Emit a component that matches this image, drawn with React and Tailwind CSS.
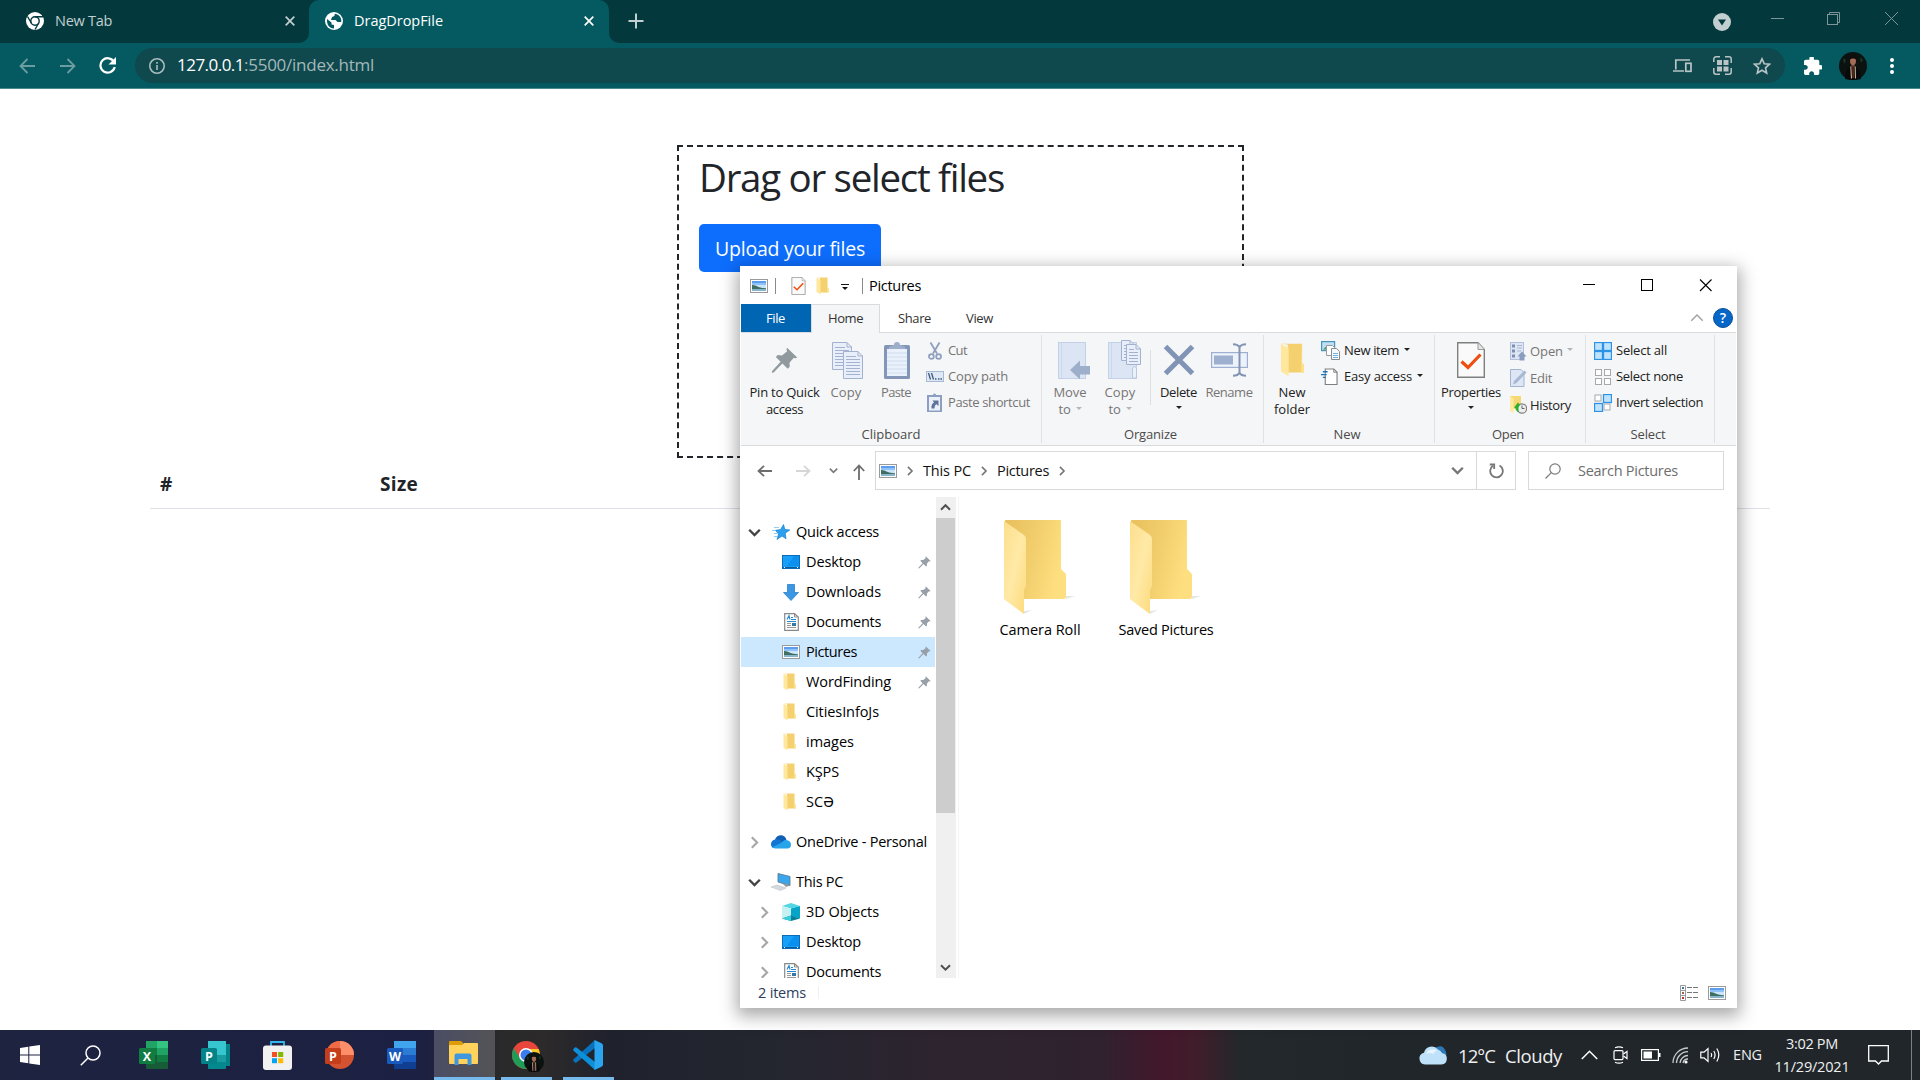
import React, { useLayoutEffect, useRef } from "react";

/* Text run whose letter spacing is computed so that it spans `w` pixels. */
function T({ w, children, className = "" }) {
  const ref = useRef(null);
  useLayoutEffect(() => {
    const el = ref.current;
    el.style.letterSpacing = "0px";
    const natural = el.getBoundingClientRect().width;
    el.style.letterSpacing = (w - natural) / String(children).length + "px";
  }, [w, children]);
  return (
    <span ref={ref} className={"inline-block shrink-0 whitespace-pre " + className}>
      {children}
    </span>
  );
}

/* ---------- shared icons ---------- */

function PicIcon({ className = "" }) {
  return (
    <svg width="18" height="14" viewBox="0 0 18 14" className={"shrink-0 " + className}>
      <rect x="0.5" y="0.5" width="17" height="13" fill="#fff" stroke="#9a9a9a" />
      <rect x="2" y="2" width="14" height="3" fill="#5c9df0" />
      <rect x="2" y="4" width="14" height="2" fill="#8fc2f7" />
      <rect x="2" y="6" width="14" height="3" fill="#cbe6fa" />
      <path d="M2 6c2-.2 4 .8 6 1.700 2 .8 4 1.300 8 1.500V10.500H2z" fill="#3f6f63" />
      <rect x="2" y="10" width="14" height="2" fill="#86b5cc" />
    </svg>
  );
}

function FolderSmall({ className = "", w = 13, h = 18 }) {
  return (
    <svg width={w} height={h} viewBox="0 0 13 18" className={"shrink-0 " + className}>
      <path d="M0.500 0.500H11.500V10.500L12.500 11.500V15.500H4V1z" fill="#f5d06f" />
      <path d="M11 1v14.500h1.500v-4l-1-1z" fill="#fde08a" />
      <path d="M0.500 0.500L4.500 3V17.500L0.500 15z" fill="#ffe79e" />
    </svg>
  );
}

function FolderLarge() {
  return (
    <svg width="74" height="98" viewBox="0 0 74 98">
      <defs>
        <linearGradient id="fb" x1="0" y1="0" x2="1" y2="0.300">
          <stop offset="0" stopColor="#e8c05c" />
          <stop offset="0.500" stopColor="#f1cd6c" />
          <stop offset="1" stopColor="#fedf80" />
        </linearGradient>
        <linearGradient id="ff" x1="0" y1="0" x2="1" y2="1">
          <stop offset="0" stopColor="#fddf8d" />
          <stop offset="0.500" stopColor="#ffe9a6" />
          <stop offset="1" stopColor="#fddb7c" />
        </linearGradient>
      </defs>
      <path d="M62 76l9 0-9 3z" fill="#dcdcdc" opacity="0.700" />
      <path d="M20 91l8-1-8 4z" fill="#dcdcdc" opacity="0.700" />
      <path d="M1 1a1 1 0 0 1 1-1H56a1 1 0 0 1 1 1V49l4 4q1 1 1 2V77a2 2 0 0 1-2 2H20L1 70z" fill="url(#fb)" />
      <path d="M0 1L20 15q2 1.500 2 4V66l-2 4V94L1 80q-1-.8-1-2z" fill="url(#ff)" />
    </svg>
  );
}

function Pin({ size = 14, color = "#97a0a8" }) {
  return (
    <svg width={size} height={size} viewBox="0 0 14 14" className="shrink-0">
      <path d="M8.300 0.400L13.600 5.400L12.400 5.800L11.800 5.600L9.600 8.200L9.700 10.300L8.700 11.300L5.900 8.600L1.200 13.400L0.400 13.200L0.600 12.400L5 7.700L2.500 5.200L3.500 4.200L5.700 4.400L8.400 2.200L8 1.500z" fill={color} />
    </svg>
  );
}

function DesktopIcon() {
  return (
    <svg width="18" height="14" viewBox="0 0 18 14">
      <rect x="0.500" y="0.500" width="17" height="13" fill="#18a0f8" stroke="#0b6cb8" />
      <path d="M12 1h5v10H5z" fill="#0a91f0" />
      <path d="M1 12.500h16" stroke="#0b5c9e" />
      <path d="M2 12.500h1M15 12.500h1" stroke="#fff" />
    </svg>
  );
}

function DownloadIcon() {
  return (
    <svg width="18" height="17" viewBox="0 0 18 17">
      <path d="M5.500 0.500h7v8h4L9 16.500L1.500 8.500h4z" fill="#3b97e3" stroke="#2880cb" strokeWidth="0.800" />
    </svg>
  );
}

function DocumentIcon() {
  return (
    <svg width="15" height="18" viewBox="0 0 15 18">
      <path d="M0.700 0.700H10.500L14.300 4V17.300H0.700z" fill="#fff" stroke="#8a8a8a" strokeWidth="1.200" />
      <path d="M10.500 1v3h3" fill="none" stroke="#8a8a8a" />
      <path d="M3 6.500L5 2.500L6 6.500M7 4.500h2M7 6.500h5M3 8.500h9" stroke="#2587cf" fill="none" strokeWidth="1.100" />
      <path d="M3 10.500h4M3 12.500h4M3 14.500h9" stroke="#9a9a9a" />
      <rect x="8" y="10" width="4" height="3" fill="#3277aa" />
    </svg>
  );
}

function StarIcon() {
  return (
    <svg width="18" height="17" viewBox="0 0 18 17">
      <path d="M11.500 0.500L12.800 5.300L17.800 6L13.300 9.200L14 14.800L10 12L5 15.500L6.500 10L3.500 6.300L8.600 5.500z" fill="#2ba0ee" stroke="#1c83cf" strokeWidth="0.700" />
      <path d="M2 3.500h5M0 6.500h3M2 9.500h3M2 12.500h3" stroke="#8fcdf6" />
    </svg>
  );
}

function OneDriveIcon() {
  return (
    <svg width="20" height="14" viewBox="0 0 20 14">
      <path d="M4 4.500C5 1.500 8 0 10.500 0.300C13 .6 15 2.500 15.500 5L8 9z" fill="#0f5fb4" />
      <path d="M4 4.500c2-.5 4 0 5.500 1L14 9l-12 4C0 12 0 9.500 0 9c0-2.500 2-4.300 4-4.500z" fill="#1277d3" />
      <path d="M10 8l3-2.500c1.500-.8 3.500-.6 4.500.3C19.500 6.800 20 8.500 20 10c0 2-1.500 3.500-3.500 3.500H4c-1 0-2-.5-2.500-1.200z" fill="#28a4ea" />
    </svg>
  );
}

function ThisPcIcon() {
  return (
    <svg width="20" height="18" viewBox="0 0 20 18">
      <path d="M7 0.500L19 3.500V12.500L7 9z" fill="#3aa6ee" stroke="#5c7a90" strokeWidth="0.900" />
      <path d="M12 11l3 3 4-1.500-4-2z" fill="#8e979e" />
      <path d="M0 14L6 12L15 15L9.500 17.500z" fill="#d5dade" stroke="#b7bdc2" strokeWidth="0.500" />
    </svg>
  );
}

function CubeIcon() {
  return (
    <svg width="18" height="18" viewBox="0 0 18 18">
      <path d="M9 0L18 3L9 5.500L0 3z" fill="#53d6e4" />
      <path d="M0 3L9 5.500V13L0 15.500z" fill="#c5f2f1" />
      <path d="M18 3L9 5.500V13L18 15.500z" fill="#06a5c8" />
      <path d="M0 15.500L9 12.500L18 15.500L9 18z" fill="#0a7f98" />
      <path d="M0 15.500L9 12.500V18z" fill="#35d0dc" />
    </svg>
  );
}

function Chev({ dir = "down", size = 11, color = "#444", sw = 2, className = "" }) {
  const d = {
    down: "M1 3.200L5.500 7.700L10 3.200",
    up: "M1 7.700L5.500 3.200L10 7.700",
    right: "M3.200 1L7.700 5.500L3.200 10",
  }[dir];
  return (
    <svg width={size} height={size} viewBox="0 0 11 11" className={"shrink-0 " + className}>
      <path d={d} fill="none" stroke={color} strokeWidth={sw} />
    </svg>
  );
}

function Tri({ color = "#222", className = "" }) {
  return (
    <svg width="6" height="3" viewBox="0 0 6 3" className={"shrink-0 " + className}>
      <path d="M0 0H6L3 3z" fill={color} />
    </svg>
  );
}

function CheckDoc({ w, h }) {
  return (
    <svg width={w} height={h} viewBox="0 0 28 36" className="shrink-0">
      <path d="M0.700 0.700H21L27.300 7.500V35.300H0.700z" fill="#fafafa" stroke="#7f7f7f" strokeWidth="1.400" />
      <path d="M21 0.700V7.500H27.300" fill="#e6e6e6" stroke="#9a9a9a" />
      <path d="M4.500 19.500L11 25.500L23.500 12.500" fill="none" stroke="#ec4f10" strokeWidth="3.200" />
    </svg>
  );
}

/* ---------- browser ---------- */

function Portrait({ size }) {
  return (
    <svg width={size} height={size} viewBox="0 0 28 28" className="shrink-0">
      <circle cx="14" cy="14" r="14" fill="#0b1210" />
      <path d="M4 6l3 2-2 4zM21 5l3 3-2 3z" fill="#1c3a28" />
      <path d="M6 27C6 19 9 15 14 15s8 4 8 12q-8 2-16 0z" fill="#08090c" />
      <path d="M12.500 12h3v3h-3z" fill="#7d4c3c" />
      <ellipse cx="14" cy="9" rx="3" ry="4" fill="#a36c56" />
      <path d="M10.500 8c-.5-5 7.500-5 7 0-1.500-2-5.500-2-7 0z" fill="#120c0a" />
      <path d="M11.800 14.500l.7 12M16.200 14.500l.3 12" stroke="#cfae88" strokeWidth="1.100" />
      <path d="M13.200 14h1.800v12h-1.800z" fill="#4b2a26" />
    </svg>
  );
}

function TabClose({ color }) {
  return (
    <svg width="10" height="10" viewBox="0 0 10 10" className="shrink-0">
      <path d="M0.700 0.700L9.300 9.300M9.300 0.700L0.700 9.300" stroke={color} strokeWidth="1.700" />
    </svg>
  );
}

function TabStrip() {
  return (
    <div className="flex h-[43px] bg-[#03393d]">
      <div className="relative flex w-[309px] items-center pl-[26px]">
        <svg width="18" height="18" viewBox="0 0 18 18" className="mb-px shrink-0">
          <circle cx="9" cy="9" r="9" fill="#fff" />
          <circle cx="9" cy="9" r="4.200" fill="none" stroke="#03393d" strokeWidth="1.400" />
          <path d="M9 4.800h8M5.300 11L1.500 4.500M12.700 11L9 17.500" stroke="#03393d" strokeWidth="1.400" />
        </svg>
        <T w={57} className="mb-[2px] ml-[11px] text-[14.500px] text-[#c2cfd0]">New Tab</T>
        <div className="mb-px ml-auto mr-[14px] flex"><TabClose color="#c2cfd0" /></div>
        <div className="absolute bottom-0 right-0 h-[10px] w-[10px] bg-[#045a60]">
          <div className="h-full w-full rounded-br-[10px] bg-[#03393d]" />
        </div>
      </div>
      <div className="flex w-[300px] items-center rounded-t-[10px] bg-[#045a60] pl-[16px]">
        <svg width="18" height="18" viewBox="0 0 18 18" className="mb-px shrink-0">
          <circle cx="9" cy="9" r="9" fill="#fff" />
          <path d="M2 7l4.500 3.500v2L9 13v3.500C4 16.500 1.500 12 2 7zM9.500 1.800c1 1.700-.5 2.700-2.500 3.200l-1 3h4.500l2 2h3.700C17 5.500 13.500 2 9.500 1.800z" fill="#045a60" />
        </svg>
        <T w={89} className="mb-[2px] ml-[11px] text-[14.500px] text-white">DragDropFile</T>
        <div className="mb-px ml-auto mr-[15px] flex"><TabClose color="#fff" /></div>
      </div>
      <div className="relative flex flex-1 items-center">
        <div className="absolute bottom-0 left-0 h-[10px] w-[10px] bg-[#045a60]">
          <div className="h-full w-full rounded-bl-[10px] bg-[#03393d]" />
        </div>
        <svg width="16" height="16" viewBox="0 0 16 16" className="mb-px ml-[19px]">
          <path d="M8 0.500V15.500M0.500 8H15.500" stroke="#c2cfd0" strokeWidth="2" />
        </svg>
        <svg width="18" height="18" viewBox="0 0 18 18" className="ml-auto">
          <circle cx="9" cy="9" r="9" fill="#c2cfd0" />
          <path d="M5 6.500H13L9 12.500z" fill="#03393d" />
        </svg>
        <svg width="128" height="14" viewBox="0 0 128 14" className="mb-[7px] ml-[40px] mr-[21px]" fill="none" stroke="#7d9698">
          <path d="M0 7.500H13" />
          <rect x="56.500" y="3.500" width="10" height="10" />
          <path d="M58.500 3.500V1.500H68.500V11.500H66.500" />
          <path d="M114 1L127 14M127 1L114 14" />
        </svg>
      </div>
    </div>
  );
}

function Toolbar() {
  return (
    <div className="flex h-[46px] items-center border-b border-[#4b8a8e] bg-[#045a60]">
      <svg width="16" height="16" viewBox="0 0 16 16" className="ml-[19px]" fill="none" stroke="#6c9da1" strokeWidth="1.800">
        <path d="M16 8H1.500M8.500 1L1.500 8L8.500 15" />
      </svg>
      <svg width="16" height="16" viewBox="0 0 16 16" className="ml-[25px]" fill="none" stroke="#6c9da1" strokeWidth="1.800">
        <path d="M0 8H14.500M7.500 1L14.500 8L7.500 15" />
      </svg>
      <svg width="17" height="17" viewBox="0 0 17 17" className="ml-[23px]">
        <path d="M15 5A7.200 7.200 0 1 0 15.700 10" fill="none" stroke="#fff" strokeWidth="2.200" />
        <path d="M17 0V7.500H9.500z" fill="#fff" />
      </svg>
      <div className="ml-[19px] flex h-[35px] w-[1650px] items-center rounded-full bg-[#0f494e] pl-[14px]">
        <svg width="16" height="16" viewBox="0 0 16 16" fill="none" stroke="#a9bcbe" strokeWidth="1.600">
          <circle cx="8" cy="8" r="7.200" />
          <path d="M8 7V12M8 4V5.700" />
        </svg>
        <div className="mb-px ml-[12px] flex text-[17px] leading-[24px]">
          <T w={67} className="text-white">127.0.0.1</T>
          <T w={130} className="text-[#a3b8ba]">:5500/index.html</T>
        </div>
        <svg width="19" height="14" viewBox="0 0 19 14" className="ml-auto" fill="none" stroke="#b9c4c5" strokeWidth="1.700">
          <path d="M17 1H2.800V10.500M0 12H11" />
          <rect x="12.800" y="4.300" width="5.200" height="8" />
        </svg>
        <svg width="19" height="19" viewBox="0 0 19 19" className="ml-[21px]">
          <path d="M.8 6V3a2.200 2.200 0 0 1 2.200-2.200H7M12 .8h4A2.200 2.200 0 0 1 18.200 3V7M18.200 12v4a2.200 2.200 0 0 1-2.200 2.200H12M7 18.200H3A2.200 2.200 0 0 1 .8 16V12" fill="none" stroke="#b9c4c5" strokeWidth="1.500" />
          <path d="M4 4h5v5H4zM10.500 4h5v5h-5zM4 10.500h5v5H4zM10.500 10.500h5v5h-5z" fill="#b9c4c5" />
        </svg>
        <svg width="18" height="18" viewBox="0 0 18 18" className="ml-[21px] mr-[14px]">
          <path d="M9 1.800L11.200 6.700L16.500 7.200L12.500 10.800L13.700 16L9 13.200L4.300 16L5.500 10.800L1.500 7.200L6.800 6.700z" fill="none" stroke="#b9c4c5" strokeWidth="1.600" />
        </svg>
      </div>
      <svg width="18" height="18" viewBox="2 2 20 20" className="ml-[19px]">
        <path d="M20.500 11H19V7c0-1.100-.9-2-2-2h-4V3.500a2.500 2.500 0 0 0-5 0V5H4c-1.100 0-2 .9-2 2v3.800h1.500c1.500 0 2.700 1.200 2.700 2.700S5 16.200 3.500 16.200H2V20c0 1.100.9 2 2 2h3.800v-1.500c0-1.500 1.200-2.700 2.700-2.700s2.700 1.200 2.700 2.700V22H17c1.100 0 2-.9 2-2v-4h1.500a2.500 2.500 0 0 0 0-5z" fill="#fff" />
      </svg>
      <div className="ml-[17px] flex"><Portrait size={28} /></div>
      <div className="ml-[23px] flex flex-col gap-[2px]">
        <div className="h-1 w-1 rounded-full bg-white" />
        <div className="h-1 w-1 rounded-full bg-white" />
        <div className="h-1 w-1 rounded-full bg-white" />
      </div>
    </div>
  );
}

function DashedBox({ children }) {
  return (
    <div className="ml-[677px] mt-[56px] h-[313px] w-[567px] border-2 border-dashed border-[#212529] pl-[20px]">
      {children}
    </div>
  );
}

function Page() {
  return (
    <div className="flex flex-1 flex-col bg-white text-[#212529]">
      <DashedBox>
        <div className="pt-[5px] text-[38.500px] leading-[50px]"><T w={305}>Drag or select files</T></div>
        <div className="mt-[22px] flex h-[48px] w-[182px] items-center justify-center rounded-[5px] bg-[#0d6efd] pt-[2px] text-[19.500px] text-white">
          <T w={150}>Upload your files</T>
        </div>
      </DashedBox>
      <div className="ml-[150px] flex h-[51px] w-[1620px] items-center border-b border-[#dee2e6] pl-[10px] pt-[2px] text-[19px] font-bold">
        <div className="w-[220px]"><T w={12}>#</T></div>
        <T w={38}>Size</T>
      </div>
    </div>
  );
}

/* ---------- explorer window ---------- */

function TitleBar() {
  return (
    <div className="flex h-[37px] items-center">
      <PicIcon className="ml-[9px]" />
      <div className="ml-[7px] h-[16px] w-px bg-[#8a8a8a]" />
      <div className="ml-[15px] flex"><CheckDoc w={15} h={18} /></div>
      <FolderSmall className="ml-[10px]" />
      <svg width="8" height="6" viewBox="0 0 8 6" className="ml-[12px] mt-[2px]">
        <path d="M0 0.500H8" stroke="#111" />
        <path d="M1 3H7L4 6z" fill="#111" />
      </svg>
      <div className="ml-[13px] h-[16px] w-px bg-[#8a8a8a]" />
      <T w={52} className="ml-[6px] text-[14.500px] text-black">Pictures</T>
      <svg width="130" height="13" viewBox="0 0 130 13" className="ml-auto mr-[23px]" fill="none" stroke="#000">
        <path d="M0 5.500H12" />
        <rect x="58.500" y="0.500" width="11" height="11" />
        <path d="M117 0.500L128.500 12M128.500 0.500L117 12" strokeWidth="1.100" />
      </svg>
    </div>
  );
}

function Tabs() {
  return (
    <div className="flex h-[28px] text-[13px] text-[#333]">
      <div className="flex w-[70px] items-center justify-center bg-[#0065b3] pr-px pt-[2px] text-white"><T w={19}>File</T></div>
      <div className="relative z-10 -mb-px flex w-[69px] items-center justify-center border border-b-0 border-[#dadbdc] bg-[#f5f6f7]"><T w={35}>Home</T></div>
      <div className="flex w-[69px] items-center justify-center pt-[2px]"><T w={33}>Share</T></div>
      <div className="flex w-[61px] items-center justify-center pt-[2px]"><T w={27}>View</T></div>
      <div className="ml-auto flex items-center">
        <Chev dir="up" size={14} color="#a0a0a0" sw={1.1} />
        <div className="ml-[9px] mr-[3px] flex h-5 w-5 items-center justify-center rounded-full border border-[#0a4f96] bg-[#0767c8] text-[14px] font-semibold leading-none text-white">?</div>
      </div>
    </div>
  );
}

function Big({ w, icon, lines, dim, shift = "", arrow }) {
  return (
    <div className={"flex shrink-0 flex-col items-center pt-[7px] leading-[17px] " + w + (dim ? " text-[#757575]" : " text-[#222]")}>
      <div className={"flex h-[40px] items-center justify-center " + shift}>{icon}</div>
      <div className="mt-1 flex h-[17px] justify-center"><T w={lines[0][1]}>{lines[0][0]}</T></div>
      <div className="flex h-[17px] items-center justify-center gap-[5px]">
        {lines[1] && <T w={lines[1][1]}>{lines[1][0]}</T>}
        {arrow && <Tri color={dim ? "#b5b5b5" : "#222"} className={lines[1] ? "mb-[3px]" : "mb-[4px]"} />}
      </div>
    </div>
  );
}

function Small({ icon, iw, label, w, dim, arrow, gap = "gap-[4px]", h = "h-[26px]" }) {
  return (
    <div className={"flex items-center " + gap + " " + h + (dim ? " text-[#757575]" : " text-[#222]")}>
      <div className={"-mt-px flex shrink-0 justify-center " + iw}>{icon}</div>
      <T w={w}>{label}</T>
      {arrow && <Tri color={dim ? "#b5b5b5" : "#222"} className="mb-[4px] ml-[1px]" />}
    </div>
  );
}

function Group({ w, title, tw, children, shift = "pr-1" }) {
  return (
    <>
      <div className={"flex shrink-0 flex-col " + w}>
        <div className="flex h-[92px]">{children}</div>
        <div className={"flex h-[20px] items-center justify-center text-[#4b4b4b] " + shift}><T w={tw}>{title}</T></div>
      </div>
      <div className="my-[2px] w-px bg-[#e0e1e3]" />
    </>
  );
}

const Sheet = ({ x, y, w = 19, h = 27 }) => (
  <g transform={`translate(${x} ${y})`}>
    <path d={`M0.500 0.500H${w - 5}L${w - 0.5} 5V${h - 0.5}H0.500z`} fill="#e9effa" stroke="#a3b3cf" />
    <path d={`M${w - 5} .5V5H${w}`} fill="none" stroke="#a3b3cf" />
    <path d={`M3 5.500H${w - 7}M3 8.500H${w - 3}M3 11.500H${w - 3}M3 14.500H${w - 3}M3 17.500H${w - 3}${h > 24 ? `M3 20.500H${w - 3}M3 23.500H${w - 3}` : ""}`} stroke="#a3b3cf" />
  </g>
);

const CopyIcon = () => (
  <svg width="31" height="37" viewBox="0 0 31 37">
    <Sheet x={0} y={0} w={20} h={28} />
    <Sheet x={11} y={9} w={20} h={28} />
  </svg>
);

const PasteIcon = () => (
  <svg width="26" height="38" viewBox="0 0 26 38">
    <rect x="0" y="4" width="26" height="34" rx="1.500" fill="#8496b8" />
    <rect x="3" y="8" width="20" height="27" fill="#eaf1fb" />
    <path d="M3 12h20M3 16h20M3 20h20M3 24h20M3 28h20M3 32h20" stroke="#cfdcf0" />
    <path d="M5 8V6l5-2a3 3 0 0 1 6 0l5 2V8z" fill="#9daecb" />
  </svg>
);

const ScissorsIcon = () => (
  <svg width="14" height="18" viewBox="0 0 14 18" fill="none" stroke="#8fa0bf">
    <path d="M2.500 0.500L9 11.500M11.500 0.500L5 11.500" strokeWidth="1.800" />
    <circle cx="3.400" cy="14.500" r="2.400" strokeWidth="1.800" />
    <circle cx="10.600" cy="14.500" r="2.400" strokeWidth="1.800" />
  </svg>
);

const PathIcon = () => (
  <svg width="18" height="11" viewBox="0 0 18 11">
    <rect x="0.500" y="0.500" width="17" height="10" fill="#dfe8f5" stroke="#a7b8d3" />
    <path d="M2.500 2l2 6.500M5.500 2l2 6.500M9 8h1.500M12 8h1.500M14.500 8h1.500" stroke="#41597f" strokeWidth="1.300" />
  </svg>
);

const ShortcutIcon = () => (
  <svg width="15" height="19" viewBox="0 0 15 19">
    <rect x="1" y="3" width="13" height="15.500" fill="#eaf1fb" stroke="#8d9fc0" strokeWidth="2" />
    <path d="M4 4V2h2a1.500 1.500 0 0 1 3 0h2v2z" fill="#8d9fc0" />
    <path d="M4.500 15.500q-.5-4.500 2.500-6L5.500 7.500H11.500V13L9.500 11.300Q7.500 12 7.500 15.500z" fill="#5f7398" />
  </svg>
);

const MoveIcon = () => (
  <svg width="33" height="37" viewBox="0 0 33 37">
    <rect x="0.500" y="0.500" width="27" height="36" fill="#dbe5f4" stroke="#c3d1e8" />
    <path d="M3.500 1V36" stroke="#cbd8ec" />
    <path d="M12 28L22 18.500V24H32V32.500H22V37.500z" fill="#9dafcb" />
  </svg>
);

const CopyToIcon = () => (
  <svg width="33" height="40" viewBox="0 0 33 40">
    <rect x="0.500" y="2.500" width="28" height="36" fill="#dbe5f4" stroke="#c3d1e8" />
    <path d="M3.500 3V38" stroke="#cbd8ec" />
    <path d="M24.500 38V28q2-3 4 0V38z" fill="#e9f0fa" stroke="#b9c8e0" />
    <Sheet x={13} y={0} w={14} h={21} />
    <Sheet x={18} y={4} w={15} h={21} />
  </svg>
);

const DeleteIcon = () => (
  <svg width="32" height="32" viewBox="0 0 32 32">
    <path d="M2.500 2.500L29.500 29.500M29.500 2.500L2.500 29.500" stroke="#8294b6" strokeWidth="5" />
  </svg>
);

const RenameIcon = () => (
  <svg width="37" height="34" viewBox="0 0 37 34">
    <rect x="0.600" y="9.600" width="35.800" height="14.800" fill="#eef3fb" stroke="#9db0cf" strokeWidth="1.200" />
    <rect x="3" y="12.500" width="19" height="9" fill="#9db0cf" />
    <path d="M22 1.200q5 0 6.500 3Q30 1.200 35 1.200M28.500 4V30M22 32.800q5 0 6.500-3Q30 32.800 35 32.800" fill="none" stroke="#8294b6" strokeWidth="2" />
  </svg>
);

const NewItemIcon = () => (
  <svg width="19" height="19" viewBox="0 0 19 19">
    <rect x="0.600" y="0.600" width="13" height="9" fill="#bfe0f3" stroke="#4c93bb" strokeWidth="1.200" />
    <path d="M2 8.500l4-4 4 4z" fill="#3c9a6d" />
    <path d="M5.500 4.500h6l2 2v8h-8z" fill="#fff" stroke="#9a9a9a" />
    <path d="M10.500 7.500h5l3 3v8h-8z" fill="#f4f9fd" stroke="#8a8a8a" />
    <path d="M12 12.500h5M12 14.500h5M12 16.500h5" stroke="#74b0da" />
  </svg>
);

const EasyIcon = () => (
  <svg width="18" height="19" viewBox="0 0 18 19">
    <path d="M4.500 1.500h9l3.500 3.500v13H4.500z" fill="#fff" stroke="#7f7f7f" strokeWidth="1.200" />
    <path d="M13.500 1.500v3.500h3.500" fill="none" stroke="#7f7f7f" />
    <path d="M2 4.500h5M0 7.500h6M2 10.500h3" stroke="#1673bd" strokeWidth="1.400" />
  </svg>
);

const OpenIcon = () => (
  <svg width="17" height="19" viewBox="0 0 17 19">
    <rect x="0.500" y="0.500" width="13" height="17" fill="#dde6f4" stroke="#b1bfd8" />
    <path d="M2 2.500h3v3H2zM2 7.500h3v3H2zM2 12.500h3v3H2z" fill="#7c8fb2" />
    <path d="M7 3.500h5M7 6h5M7 9h4" stroke="#a8b7d2" />
    <path d="M12 9.500L16.500 14.500H14.500V18.500H9.500V14.500H7.500z" fill="#8b9dbf" />
  </svg>
);

const EditIcon = () => (
  <svg width="17" height="18" viewBox="0 0 17 18">
    <path d="M0.500 0.500H11L14 3.500V17.500H0.500z" fill="#dde6f4" stroke="#a3b3cf" />
    <path d="M3 15.500L4 12L14.500 1.500L16.500 3.500L6.500 14z" fill="#a8b7d2" />
  </svg>
);

const HistoryIcon = () => (
  <svg width="17" height="18" viewBox="0 0 17 18">
    <path d="M0 0H11V13H3z" fill="#f8d775" />
    <path d="M0 0L3.500 2.500V17L0 15z" fill="#ffe9a0" />
    <circle cx="12" cy="12.500" r="4.700" fill="#eee" stroke="#7f7f7f" strokeWidth="1.200" />
    <path d="M12 9.500v3h2.500" fill="none" stroke="#666" />
    <path d="M4 11.500L8 6.500L10 9Q7.500 11 9 16Q5.500 15 5.500 12z" fill="#2fb02c" />
  </svg>
);

function SelectIcon({ on, joined }) {
  const pts = joined ? [[0, 0], [9, 0], [0, 9], [9, 9]] : [[0.5, 0.5], [9.5, 0.5], [0.5, 9.5], [9.5, 9.5]];
  return (
    <svg width="18" height="18" viewBox="0 0 18 18">
      {pts.map(([x, y], i) =>
        on[i] ? (
          <rect key={i} x={x + 0.5} y={y + 0.5} width="8" height="8" fill="#bfe3fd" stroke="#2e93e6" strokeWidth="1.300" />
        ) : (
          <rect key={i} x={x + 1} y={y + 1} width="6" height="6" fill="#fff" stroke="#a8a8a8" />
        )
      )}
    </svg>
  );
}

function Ribbon() {
  return (
    <div className="flex h-[114px] border-y border-[#dadbdc] bg-[#f5f6f7] text-[13px]">
      <Group w="w-[300px]" title="Clipboard" tw={59} shift="">
        <Big w="w-[87px]" icon={<Pin size={27} color="#8f999e" />} lines={[["Pin to Quick", 70], ["access", 37]]} />
        <Big w="w-[36px]" dim icon={<CopyIcon />} shift="pl-[2px]" lines={[["Copy", 31]]} />
        <Big w="w-[62px] pl-[2px]" dim icon={<PasteIcon />} shift="pl-[2px]" lines={[["Paste", 30]]} />
        <div className="pt-[5px]">
          <Small icon={<ScissorsIcon />} iw="w-[18px]" label="Cut" w={19} dim />
          <Small icon={<PathIcon />} iw="w-[18px]" label="Copy path" w={60} dim />
          <Small icon={<ShortcutIcon />} iw="w-[18px] pr-px" label="Paste shortcut" w={82} dim />
        </div>
      </Group>
      <Group w="w-[221px]" title="Organize" tw={53}>
        <Big w="w-[56px]" dim icon={<MoveIcon />} shift="pl-2" lines={[["Move", 33], ["to", 12]]} arrow />
        <Big w="w-[44px]" dim icon={<CopyToIcon />} shift="pl-2" lines={[["Copy", 31], ["to", 12]]} arrow />
        <div className="ml-[8px] mt-[17px] h-[55px] w-px bg-[#dcdee0]" />
        <Big w="w-[55px]" icon={<DeleteIcon />} lines={[["Delete", 37]]} arrow />
        <Big w="w-[46px]" dim icon={<RenameIcon />} lines={[["Rename", 47]]} />
      </Group>
      <Group w="w-[170px]" title="New" tw={27}>
        <Big w="w-[56px]" icon={<FolderSmall w={25} h={36} />} lines={[["New", 27], ["folder", 36]]} />
        <div className="pl-px pt-[5px]">
          <Small icon={<NewItemIcon />} iw="w-[19px]" label="New item" w={55} arrow />
          <Small icon={<EasyIcon />} iw="w-[19px] pr-[2px]" label="Easy access" w={68} arrow />
        </div>
      </Group>
      <Group w="w-[150px]" title="Open" tw={32}>
        <Big w="w-[72px]" icon={<CheckDoc w={28} h={36} />} lines={[["Properties", 60]]} arrow />
        <div className="pl-[3px] pt-[5px]">
          <Small icon={<OpenIcon />} iw="w-[17px]" gap="gap-[3px]" h="h-[27px]" label="Open" w={33} dim arrow />
          <Small icon={<EditIcon />} iw="w-[17px]" gap="gap-[3px]" h="h-[27px]" label="Edit" w={22} dim />
          <Small icon={<HistoryIcon />} iw="w-[17px]" gap="gap-[3px]" h="h-[27px]" label="History" w={41} />
        </div>
      </Group>
      <Group w="w-[128px]" title="Select" tw={35}>
        <div className="pl-[8px] pt-[5px]">
          <Small icon={<SelectIcon on={[1, 1, 1, 1]} joined />} iw="w-[18px]" label="Select all" w={51} />
          <Small icon={<SelectIcon on={[0, 0, 0, 0]} />} iw="w-[18px]" label="Select none" w={67} />
          <Small icon={<SelectIcon on={[0, 1, 1, 0]} joined />} iw="w-[18px]" label="Invert selection" w={87} />
        </div>
      </Group>
    </div>
  );
}

function AddressRow() {
  return (
    <div className="flex h-[51px] pt-[5px] text-[14.500px] text-[#111]">
      <div className="flex h-[39px] w-[134px] items-center">
        <svg width="15" height="12" viewBox="0 0 15 12" className="ml-[16px]" fill="none" stroke="#6d6d6d" strokeWidth="1.800">
          <path d="M15 6H1.500M7 .8L1.500 6L7 11.200" />
        </svg>
        <svg width="15" height="12" viewBox="0 0 15 12" className="ml-[24px]" fill="none" stroke="#d6d6d6" strokeWidth="1.800">
          <path d="M0 6H13.500M8 .8L13.500 6L8 11.200" />
        </svg>
        <Chev size={9} color="#7a7a7a" sw={2} className="ml-[18px]" />
        <svg width="12" height="16" viewBox="0 0 12 16" className="ml-[15px] mt-[3px]" fill="none" stroke="#6d6d6d" strokeWidth="1.800">
          <path d="M6 16V1.500M.8 7L6 1.500L11.200 7" />
        </svg>
      </div>
      <div className="flex h-[39px] w-[641px] items-center border border-[#d9d9d9]">
        <PicIcon className="ml-[3px]" />
        <Chev dir="right" size={10} color="#777" sw={1.8} className="ml-[8px]" />
        <T w={48} className="ml-[8px]">This PC</T>
        <Chev dir="right" size={10} color="#777" sw={1.8} className="ml-[8px]" />
        <T w={52} className="ml-[8px]">Pictures</T>
        <Chev dir="right" size={10} color="#777" sw={1.8} className="ml-[8px]" />
        <Chev size={13} color="#777" sw={2} className="ml-auto mr-[12px]" />
        <div className="flex h-full w-[39px] items-center justify-center border-l border-[#d9d9d9]">
          <svg width="15" height="16" viewBox="0 0 15 16" fill="none" stroke="#777" strokeWidth="1.800">
            <path d="M10.500 2.500A6.300 6.300 0 1 1 4 2.800" />
            <path d="M.8 1.500H5.200V6" />
          </svg>
        </div>
      </div>
      <div className="ml-[12px] flex h-[39px] w-[196px] items-center border border-[#d9d9d9] pl-[16px] text-[#6d6d6d]">
        <svg width="16" height="16" viewBox="0 0 16 16" fill="none" stroke="#7a7a7a" strokeWidth="1.200">
          <circle cx="10" cy="6" r="5.200" />
          <path d="M6.300 9.700L0.500 15.500" />
        </svg>
        <T w={100} className="ml-[17px]">Search Pictures</T>
      </div>
    </div>
  );
}

function NavChild({ icon, label, w, pin, selected, chev }) {
  return (
    <div className={"flex h-[30px] shrink-0 items-center " + (selected ? "bg-[#cce8ff]" : "")}>
      <div className="flex w-[41px] items-center pl-[17px]">{chev && <Chev dir="right" size={13} color="#a6a6a6" sw={1.8} />}</div>
      <div className="flex w-[18px] justify-center">{icon}</div>
      <T w={w} className="ml-[6px]">{label}</T>
      {pin && <div className="ml-auto mr-[4px]"><Pin size={13} /></div>}
    </div>
  );
}

function NavRoot({ icon, label, w, open, mt = "" }) {
  return (
    <div className={"flex h-[30px] shrink-0 items-center " + mt}>
      <div className="flex w-[31px] items-center pl-[7px]">
        <Chev dir={open ? "down" : "right"} size={13} color={open ? "#444" : "#a6a6a6"} sw={open ? 2 : 1.8} />
      </div>
      <div className="-ml-px flex w-[20px] justify-center">{icon}</div>
      <T w={w} className="ml-[5px]">{label}</T>
    </div>
  );
}

function NavPane() {
  const folder = <FolderSmall className="mr-[3px]" />;
  return (
    <div className="flex h-full w-[194px] flex-col overflow-hidden pt-[20px] text-[14.500px] text-black">
      <NavRoot open icon={<StarIcon />} label="Quick access" w={83} />
      <NavChild icon={<DesktopIcon />} label="Desktop" w={55} pin />
      <NavChild icon={<DownloadIcon />} label="Downloads" w={75} pin />
      <NavChild icon={<DocumentIcon />} label="Documents" w={75} pin />
      <NavChild icon={<PicIcon />} label="Pictures" w={51} pin selected />
      <NavChild icon={folder} label="WordFinding" w={85} pin />
      <NavChild icon={folder} label="CitiesInfoJs" w={73} />
      <NavChild icon={folder} label="images" w={48} />
      <NavChild icon={folder} label="KŞPS" w={33} />
      <NavChild icon={folder} label="SCƏ" w={28} />
      <NavRoot mt="mt-[10px]" icon={<OneDriveIcon />} label="OneDrive - Personal" w={131} />
      <NavRoot mt="mt-[10px]" open icon={<ThisPcIcon />} label="This PC" w={47} />
      <NavChild icon={<CubeIcon />} label="3D Objects" w={73} chev />
      <NavChild icon={<DesktopIcon />} label="Desktop" w={55} chev />
      <NavChild icon={<DocumentIcon />} label="Documents" w={75} chev />
    </div>
  );
}

function Item({ label, w }) {
  return (
    <div className="flex w-[126px] flex-col items-center">
      <div className="pl-[2px]"><FolderLarge /></div>
      <T w={w} className="mt-[1px] leading-[22px]">{label}</T>
    </div>
  );
}

function Explorer() {
  return (
    <div className="absolute left-[740px] top-[266px] flex h-[742px] w-[997px] flex-col bg-white p-px shadow-[0_5px_16px_3px_rgba(0,0,0,0.34)]">
      <TitleBar />
      <Tabs />
      <Ribbon />
      <AddressRow />
      <div className="flex h-[481px]">
        <NavPane />
        <div className="ml-px flex w-[20px] flex-col items-center bg-[#f0f0f0]">
          <Chev dir="up" size={11} color="#505050" sw={2} className="my-[5px] mr-[2px]" />
          <div className="mr-px h-[295px] w-[19px] bg-[#cdcdcd]" />
          <Chev size={11} color="#505050" sw={2} className="mb-[5px] mr-[2px] mt-auto" />
        </div>
        <div className="ml-[2px] flex border-l border-[#f5f5f5] pl-[18px] pt-[23px] text-[14.500px] text-black">
          <Item label="Camera Roll" w={81} />
          <Item label="Saved Pictures" w={95} />
        </div>
      </div>
      <div className="flex h-[29px] items-center text-[14.500px] text-[#2b3e5c]">
        <T w={48} className="ml-[17px]">2 items</T>
        <div className="ml-[12px] h-[13px] w-px bg-[#f0f0f0]" />
        <svg width="18" height="16" viewBox="0 0 18 16" className="ml-auto mr-[10px]">
          <path d="M.5 .5h5v15h-5zM.5 5.500h5M.5 10.500h5" fill="#fff" stroke="#9a9a9a" />
          <path d="M2 2h2v2H2z" fill="#3c7ba5" />
          <path d="M2 7h2v2H2z" fill="#9a6740" />
          <path d="M2 12h2v2H2z" fill="#c5302c" />
          <path d="M7 2.500h5M13 2.500h5M7 7.500h5M13 7.500h5M7 12.500h5M13 12.500h5" stroke="#777" />
        </svg>
        <PicIcon className="mr-[10px]" />
      </div>
    </div>
  );
}

/* ---------- taskbar ---------- */

function Badge({ fill, letter }) {
  return (
    <>
      <rect x="0" y="7" width="16" height="16" rx="1.500" fill={fill} />
      <text x="8" y="19.500" textAnchor="middle" fontSize="12.500" fontWeight="700" fill="#fff" fontFamily="Open Sans, sans-serif">{letter}</text>
    </>
  );
}

const Slot = ({ children, className = "w-[62px]" }) => (
  <div className={"flex h-full shrink-0 items-center justify-center " + className}>{children}</div>
);

function ChromeIcon() {
  return (
    <div className="relative flex">
      <svg width="32" height="32" viewBox="0 0 32 32">
        <circle cx="14" cy="15" r="14" fill="#e8453c" />
        <path d="M1.900 8A14 14 0 0 0 14 29L20 18.500L14 15L8 18.500z" fill="#1f9d58" />
        <path d="M26.500 9A14 14 0 0 1 14 29L20 18.500A7 7 0 0 0 14 9z" fill="#fbc926" />
        <circle cx="14" cy="15" r="7" fill="#fff" />
        <circle cx="14" cy="15" r="5.500" fill="#3b7ded" />
      </svg>
      <div className="absolute bottom-0 right-0 flex"><Portrait size={20} /></div>
    </div>
  );
}

function Taskbar() {
  return (
    <div className="flex h-[50px] items-stretch bg-[linear-gradient(90deg,#1e2340_0px,#1c2042_420px,#2a2a2a_505px,#2c2a2a_545px,#1f212d_610px,#24262f_770px,#2d2430_940px,#30222f_1100px,#42182c_1160px,#411c2a_1195px,#23282b_1240px,#20262a_1400px,#20262a_1920px)] text-[#f0f0f0]">
      <Slot className="w-[60px]">
        <svg width="20" height="20" viewBox="0 0 20 20" fill="#fff">
          <path d="M0 3L8.300 1.700V9.500H0zM9.300 1.500L20 0V9.500H9.300zM0 10.500H8.300V18.300L0 17zM9.300 10.500H20V20L9.300 18.500z" />
        </svg>
      </Slot>
      <Slot className="w-[62px] pr-[1px]">
        <svg width="21" height="21" viewBox="0 0 21 21" fill="none" stroke="#fff" strokeWidth="1.500">
          <circle cx="13" cy="8" r="7" />
          <path d="M8 13L0.800 20.200" />
        </svg>
      </Slot>
      <Slot>
        <svg width="29" height="28" viewBox="0 0 29 28">
          <rect x="7" y="0" width="22" height="28" rx="1" fill="#185c37" />
          <path d="M7 0h11v7H7z" fill="#21a366" /><path d="M18 0h11v7H18z" fill="#33c481" />
          <path d="M7 7h11v7H7z" fill="#107c41" /><path d="M18 7h11v7H18z" fill="#21a366" />
          <path d="M18 14h11v7H18z" fill="#107c41" />
          <Badge fill="#107c41" letter="X" />
        </svg>
      </Slot>
      <Slot>
        <svg width="29" height="28" viewBox="0 0 29 28">
          <rect x="22" y="3" width="7" height="22" fill="#038387" />
          <rect x="7" y="0" width="18" height="28" rx="1" fill="#048a8e" />
          <path d="M7 0h18v14H7z" fill="#37c6d0" /><path d="M7 14h18v7H7z" fill="#1a9ba1" />
          <Badge fill="#038387" letter="P" />
        </svg>
      </Slot>
      <Slot>
        <svg width="29" height="29" viewBox="0 0 29 29">
          <path d="M8 6V1h13v5" fill="none" stroke="#35b5ee" strokeWidth="1.800" />
          <rect x="0" y="4.500" width="29" height="24.500" rx="3" fill="#f1f1f1" />
          <path d="M9 11h5v5H9z" fill="#f25022" /><path d="M15.200 11h5v5h-5z" fill="#7fba00" />
          <path d="M9 17.200h5v5H9z" fill="#00a4ef" /><path d="M15.200 17.200h5v5h-5z" fill="#ffb900" />
        </svg>
      </Slot>
      <Slot>
        <svg width="29" height="28" viewBox="0 0 29 28">
          <circle cx="15" cy="14" r="14" fill="#d35230" />
          <path d="M15 0A14 14 0 0 0 1 14H15z" fill="#ed6c47" />
          <path d="M15 0A14 14 0 0 1 29 14H15z" fill="#ff8f6b" />
          <Badge fill="#c43e1c" letter="P" />
        </svg>
      </Slot>
      <Slot>
        <svg width="29" height="28" viewBox="0 0 29 28">
          <rect x="7" y="0" width="22" height="28" rx="1" fill="#103f91" />
          <path d="M7 0h22v7H7z" fill="#41a5ee" /><path d="M7 7h22v7H7z" fill="#2b7cd3" /><path d="M7 14h22v7H7z" fill="#185abd" />
          <Badge fill="#185abd" letter="W" />
        </svg>
      </Slot>
      <Slot className="ml-[2px] w-[61px] border-b-[3px] border-[#76b9ed] bg-white/20 pr-[2px]">
        <svg width="29" height="25" viewBox="0 0 29 25">
          <path d="M0 1a1 1 0 0 1 1-1H12l2 2V6H0z" fill="#dd9b06" />
          <path d="M0 4H13L15 2H28a1 1 0 0 1 1 1V22a1 1 0 0 1-1 1H1a1 1 0 0 1-1-1z" fill="#ffd25c" />
          <path d="M5.500 24V14.500a2 2 0 0 1 2-2h13a2 2 0 0 1 2 2V24H18.500V18H9.500V24z" fill="#3f97e0" />
        </svg>
      </Slot>
      <Slot className="ml-[6px] w-[51px] border-b-[3px] border-[#76b9ed] pl-[2px] pt-[4px]"><ChromeIcon /></Slot>
      <Slot className="ml-[11px] w-[51px] border-b-[3px] border-[#76b9ed] pr-[2px] pt-[2px]">
        <svg width="30" height="30" viewBox="0 0 30 30">
          <path d="M22 0V8L3.500 22.500Q2.500 23 1.800 22.400L.5 21Q-.3 20 .6 19.200z" fill="#0a72bd" />
          <path d="M22 30V22L3.500 7.500Q2.500 7 1.800 7.600L.5 9Q-.3 10 .6 10.800z" fill="#0d8fd9" />
          <path d="M21.500 0L28.500 3.200Q30 4 30 5.500V24.500Q30 26 28.500 26.800L21.500 30z" fill="#2aa5f0" />
        </svg>
      </Slot>
      <div className="flex flex-1 items-center pl-[805px]">
        <svg width="28" height="20" viewBox="0 0 28 20" className="mb-px shrink-0">
          <path d="M16 3q8-5 11 4 1 4-1 7l-6 3z" fill="#2e78b5" />
          <path d="M6 19.500a6 6 0 0 1-1-11.800A8 8 0 0 1 19 4.500q3 1 4 3.500a5.800 5.800 0 0 1-.500 11.500z" fill="#bfe2fa" />
          <path d="M7 9a7 7 0 0 1 11-3q-3 0-3.500 3-3-2-7.500 0z" fill="#e9f6ff" />
        </svg>
        <T w={37} className="ml-[11px] mt-[2px] text-[18.500px]">12°C</T>
        <T w={57} className="ml-[10px] mt-[2px] text-[18.500px]">Cloudy</T>
        <svg width="17" height="10" viewBox="0 0 17 10" className="ml-[19px] shrink-0" fill="none" stroke="#fff" strokeWidth="1.500">
          <path d="M.8 9L8.500 1.200L16.200 9" />
        </svg>
        <svg width="15" height="18" viewBox="0 0 15 18" className="ml-[15px] shrink-0" fill="none" stroke="#fff" strokeWidth="1.200">
          <rect x="1" y="4.600" width="9" height="9" rx="1" />
          <path d="M10.500 8L14 5.500V12.500L10.500 10M2 1.800Q6 0 10 1.800M2 16.200Q6 18 10 16.200" />
        </svg>
        <svg width="20" height="12" viewBox="0 0 20 12" className="ml-[13px] shrink-0">
          <rect x=".6" y=".6" width="16.800" height="10.800" fill="none" stroke="#fff" strokeWidth="1.200" />
          <rect x="2.500" y="2.500" width="8.500" height="7" fill="#fff" />
          <rect x="18" y="4" width="1.500" height="4" fill="#fff" />
        </svg>
        <svg width="17" height="17" viewBox="0 0 17 17" className="ml-[11px] shrink-0" fill="none" stroke="#c9cccd" strokeWidth="1.300">
          <path d="M1 16A15 15 0 0 1 16 1M4.500 16A11.500 11.500 0 0 1 16 4.700M8 16A8 8 0 0 1 16 8.500M11 16A5 5 0 0 1 16 12" />
          <circle cx="14" cy="15" r="1.600" fill="#fff" stroke="none" />
        </svg>
        <svg width="21" height="16" viewBox="0 0 21 16" className="ml-[11px] shrink-0" fill="none" stroke="#fff" strokeWidth="1.200">
          <path d="M.8 5.200H4L8 1.500V14.500L4 10.800H.8z" />
          <path d="M11 6Q12.300 8 11 10M13.800 4Q16.300 8 13.800 12M16.800 1.500Q20.800 8 16.800 14.500" />
        </svg>
        <T w={29} className="ml-[12px] text-[14.500px]">ENG</T>
        <div className="ml-[11px] flex w-[78px] flex-col items-center text-[14.500px] leading-[23px]">
          <T w={52}>3:02 PM</T>
          <T w={75}>11/29/2021</T>
        </div>
        <svg width="21" height="20" viewBox="0 0 21 20" className="ml-[17px] shrink-0" fill="none" stroke="#fff" strokeWidth="1.300">
          <path d="M.7 .7H20.300V16H13.500L10.500 19L7.500 16H.7z" />
        </svg>
        <div className="ml-auto mr-[8px] h-full w-px bg-[#7d8082]" />
      </div>
    </div>
  );
}

export default function App() {
  return (
    <div className="relative flex h-[1080px] w-[1920px] flex-col overflow-hidden bg-white font-['Open_Sans','Noto_Sans',sans-serif]">
      <TabStrip />
      <Toolbar />
      <Page />
      <Explorer />
      <Taskbar />
    </div>
  );
}
